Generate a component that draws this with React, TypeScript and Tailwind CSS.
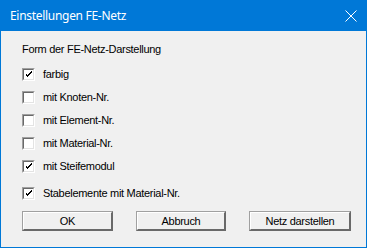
import React from 'react';

const rows = [
  { label: 'farbig', checked: true },
  { label: 'mit Knoten-Nr.', checked: false },
  { label: 'mit Element-Nr.', checked: false },
  { label: 'mit Material-Nr.', checked: false },
  { label: 'mit Steifemodul', checked: true },
];

function CheckBox({ checked }: { checked: boolean }) {
  // classic sunken box
  return (
    <div className="w-[13px] h-[13px] border border-t-[#a0a0a0] border-l-[#a0a0a0] border-r-white border-b-white">
      <div className="w-full h-full border border-t-[#696969] border-l-[#696969] border-r-[#e3e3e3] border-b-[#e3e3e3] bg-white flex items-center justify-center">
        {checked && (
          <svg width="7" height="7" viewBox="0 0 7 7" shapeRendering="crispEdges">
            <path d="M0 2h1v3h1v1h1v-1h1v-1h1v-1h1v-1h1v-2h-1v1h-1v1h-1v1h-1v1h-1v-1h-1v-1h-1z" fill="#000" />
          </svg>
        )}
      </div>
    </div>
  );
}

function Row({ label, checked }: { label: string; checked: boolean }) {
  return (
    <div className="h-[23px] flex items-center gap-2">
      <CheckBox checked={checked} />
      <span>{label}</span>
    </div>
  );
}

function Button({ label, width }: { label: string; width: string }) {
  return (
    <div className={`${width} h-[20px] border border-t-[#a0a0a0] border-l-[#a0a0a0] border-r-[#696969] border-b-[#696969]`}>
      <div className="w-full h-full border border-t-white border-l-white border-r-[#696969] border-b-[#696969] bg-[#f0f0f0] flex items-center justify-center">
        {label}
      </div>
    </div>
  );
}

export default function App() {
  return (
    <div className="w-[367px] h-[248px] flex flex-col border border-t-0 border-[#0078d7] bg-[#f0f0f0] text-black">
      {/* Title bar */}
      <div className="h-[31px] bg-[#0078d7] flex items-center justify-between pl-[9px] pr-[9px] text-white text-[12px] tracking-[-0.3px] font-['Noto_Sans',sans-serif]">
        <span>Einstellungen FE-Netz</span>
        <svg width="12" height="12" viewBox="0 0 12 12">
          <path d="M0.5 0.5L11.5 11.5M11.5 0.5L0.5 11.5" stroke="#fff" strokeWidth="1" />
        </svg>
      </div>

      {/* Body */}
      <div className="flex flex-col pl-[21px] pt-[12px] text-[11px] leading-[13px] tracking-[-0.3px] font-['Liberation_Sans',Arial,sans-serif]">
        <div>Form der FE-Netz-Darstellung</div>
        <div className="mt-[7px] flex flex-col">
          {rows.map((r) => (
            <Row key={r.label} label={r.label} checked={r.checked} />
          ))}
        </div>
        <div className="mt-[4px]">
          <Row label="Stabelemente mit Material-Nr." checked />
        </div>
        <div className="mt-[6px] flex gap-[23px]">
          <Button label="OK" width="w-[91px]" />
          <Button label="Abbruch" width="w-[90px]" />
          <Button label="Netz darstellen" width="w-[102px]" />
        </div>
      </div>
    </div>
  );
}
